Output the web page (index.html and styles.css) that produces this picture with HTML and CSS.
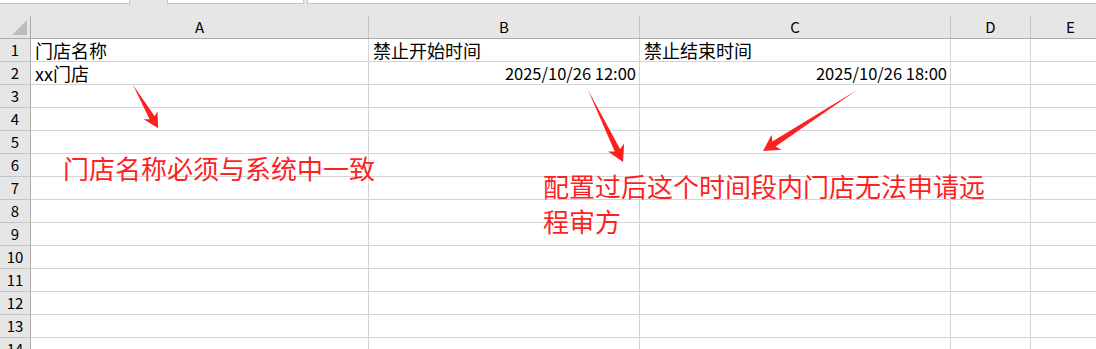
FILE: index.html
```html
<!DOCTYPE html>
<html lang="zh-CN">
  <head>
    <meta charset="UTF-8" />
    <meta name="viewport" content="width=device-width, initial-scale=1.0" />
    <title>门店禁止时间配置</title>
    <link rel="stylesheet" href="styles.css">
  </head>
  <body>
    <!-- ========== TOP STRIP ========== -->
    <div class="topbar">
      <div class="box box-name"></div>
      <div class="box box-mid"></div>
      <div class="box box-formula"></div>
    </div>

    <!-- ========== SHEET ========== -->
    <div class="sheet">
      <div class="row head">
        <div class="corner"><span class="tri"></span></div>
        <div class="colhead">A</div>
        <div class="colhead">B</div>
        <div class="colhead">C</div>
        <div class="colhead">D</div>
        <div class="colhead">E</div>
      </div>
      <div class="row">
        <div class="num">1</div>
        <div class="cell">门店名称</div>
        <div class="cell">禁止开始时间</div>
        <div class="cell">禁止结束时间</div>
        <div class="cell"></div>
        <div class="cell"></div>
      </div>
      <div class="row">
        <div class="num">2</div>
        <div class="cell">xx门店</div>
        <div class="cell right">2025/10/26 12:00</div>
        <div class="cell right">2025/10/26 18:00</div>
        <div class="cell"></div>
        <div class="cell"></div>
      </div>
      <div class="row"><div class="num">3</div><div class="cell"></div><div class="cell"></div><div class="cell"></div><div class="cell"></div><div class="cell"></div></div>
      <div class="row"><div class="num">4</div><div class="cell"></div><div class="cell"></div><div class="cell"></div><div class="cell"></div><div class="cell"></div></div>
      <div class="row"><div class="num">5</div><div class="cell"></div><div class="cell"></div><div class="cell"></div><div class="cell"></div><div class="cell"></div></div>
      <div class="row"><div class="num">6</div><div class="cell"></div><div class="cell"></div><div class="cell"></div><div class="cell"></div><div class="cell"></div></div>
      <div class="row"><div class="num">7</div><div class="cell"></div><div class="cell"></div><div class="cell"></div><div class="cell"></div><div class="cell"></div></div>
      <div class="row"><div class="num">8</div><div class="cell"></div><div class="cell"></div><div class="cell"></div><div class="cell"></div><div class="cell"></div></div>
      <div class="row"><div class="num">9</div><div class="cell"></div><div class="cell"></div><div class="cell"></div><div class="cell"></div><div class="cell"></div></div>
      <div class="row"><div class="num">10</div><div class="cell"></div><div class="cell"></div><div class="cell"></div><div class="cell"></div><div class="cell"></div></div>
      <div class="row"><div class="num">11</div><div class="cell"></div><div class="cell"></div><div class="cell"></div><div class="cell"></div><div class="cell"></div></div>
      <div class="row"><div class="num">12</div><div class="cell"></div><div class="cell"></div><div class="cell"></div><div class="cell"></div><div class="cell"></div></div>
      <div class="row"><div class="num">13</div><div class="cell"></div><div class="cell"></div><div class="cell"></div><div class="cell"></div><div class="cell"></div></div>
      <div class="row"><div class="num">14</div><div class="cell"></div><div class="cell"></div><div class="cell"></div><div class="cell"></div><div class="cell"></div></div>
    </div>

    <!-- ========== ANNOTATIONS ========== -->
    <svg class="arrows" width="1096" height="349" viewBox="0 0 1096 349">
      <polygon transform="translate(133 85) rotate(59.8)" points="0,0 38,-3 35,-8 50,0 35,8 38,3" />
      <polygon transform="translate(588 90) rotate(64)" points="0,0 67,-3 64,-9 80,0 64,9 67,3" />
      <polygon transform="translate(857 90) rotate(147)" points="0,0 99,-3 96,-9 112,0 96,9 99,3" />
    </svg>
    <p class="note note-name">门店名称必须与系统中一致</p>
    <p class="note note-time">配置过后这个时间段内门店无法申请远程审方</p>
  </body>
</html>
```

FILE: styles.css
```css
:root {
  --head-bg: #e6e6e6;
  --grid: #d4d4d4;
  --head-line: #ababab;
  --head-sep: #c4c4c4;
  --note: #ff1f1f;
}

* {
  margin: 0;
  padding: 0;
  box-sizing: border-box;
}

body {
  width: 1096px;
  height: 349px;
  overflow: hidden;
  position: relative;
  background-color: #fff;
  font-family: "Noto Sans CJK SC", sans-serif;
  color: #000;
}

/* ========== TOP STRIP ========== */
.topbar {
  display: flex;
  background-color: var(--head-bg);
  padding-bottom: 12px;
}

.box {
  height: 4px;
  background-color: #fff;
  border: 1px solid #c6c6c6;
  border-top: none;
}

.box-name {
  width: 131px;
  margin-left: -1px;
}

.box-mid {
  width: 137px;
  margin-left: 37px;
}

.box-formula {
  flex: 1;
  margin-left: 3px;
  margin-right: -1px;
}

/* ========== SHEET ========== */
.sheet {
  width: 1111px;
}

.row {
  display: grid;
  grid-template-columns: 31px 338px 271px 311px 80px 80px;
  height: 23px;
}

.row.head {
  background-color: var(--head-bg);
  border-bottom: 1px solid var(--head-line);
}

.corner {
  position: relative;
  border-right: 1px solid var(--head-line);
}

.tri {
  position: absolute;
  right: 3px;
  bottom: 3px;
  width: 0;
  height: 0;
  border-left: 15px solid transparent;
  border-bottom: 15px solid #bdbdbd;
}

.colhead {
  border-right: 1px solid var(--head-sep);
  text-align: center;
  font-size: 15px;
  line-height: 22px;
}

.num {
  background-color: var(--head-bg);
  border-right: 1px solid var(--head-line);
  border-bottom: 1px solid #c4c4c4;
  text-align: center;
  font-size: 15px;
  line-height: 22px;
}

.cell {
  border-right: 1px solid var(--grid);
  border-bottom: 1px solid var(--grid);
  padding: 0 3px 0 4px;
  font-size: 18px;
  line-height: 22px;
  white-space: nowrap;
}

.cell.right {
  text-align: right;
  font-size: 16.5px;
}

/* ========== ANNOTATIONS ========== */
.arrows {
  position: absolute;
  top: 0;
  left: 0;
  pointer-events: none;
}

.arrows polygon {
  fill: var(--note);
}

.note {
  position: absolute;
  color: var(--note);
  font-size: 26px;
  line-height: 35px;
}

.note-name {
  left: 63px;
  top: 150px;
}

.note-time {
  left: 543px;
  top: 168px;
  width: 452px;
}
```
